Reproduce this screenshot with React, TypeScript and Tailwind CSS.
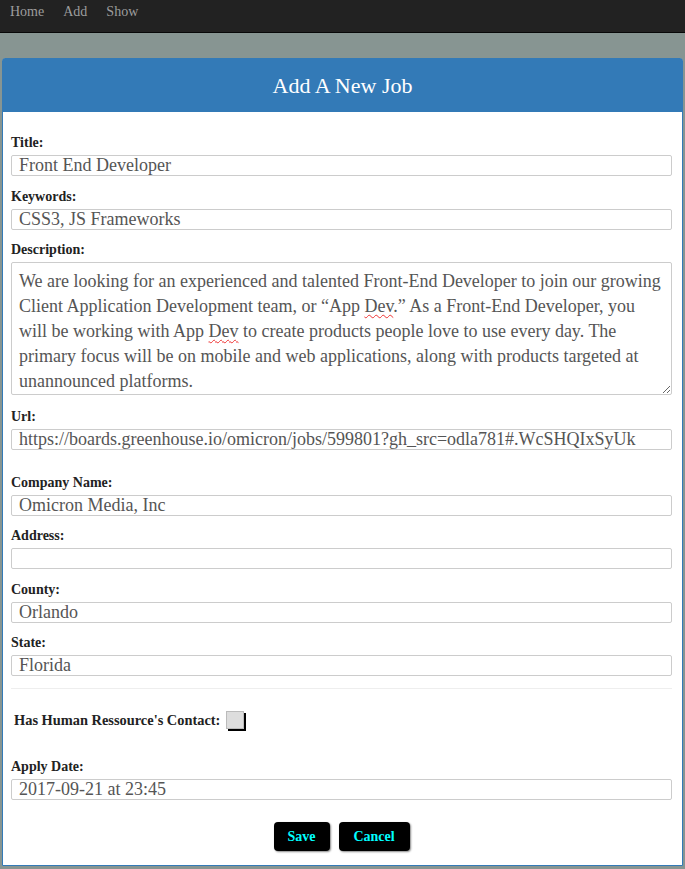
const serif = "font-['Liberation_Serif',_'Times_New_Roman',_serif]";

const fieldsTop = [
    { label: "Title:", value: "Front End Developer" },
    { label: "Keywords:", value: "CSS3, JS Frameworks" },
];

const fieldsCompany = [
    { label: "Company Name:", value: "Omicron Media, Inc" },
    { label: "Address:", value: "" },
    { label: "County:", value: "Orlando" },
    { label: "State:", value: "Florida" },
];

function Field({ label, value }: { label: string; value: string }) {
    return (
        <div className="flex flex-col">
            <label className="block text-[14px] font-bold leading-4 text-[#222] mb-[4px]">{label}</label>
            <input
                defaultValue={value}
                className={`${serif} h-[21px] w-full border border-[#ccc] rounded-[2px] px-[7px] text-[18px] leading-[19px] text-[#555] outline-none bg-white`}
            />
        </div>
    );
}

function Dev() {
    return <span className="underline decoration-wavy decoration-[#e33] decoration-1 underline-offset-2">Dev</span>;
}

export default function App() {
    return (
        <div className={`${serif} min-h-[869px] w-full bg-[#879592]`}>
            {/* navbar */}
            <nav className="h-[33px] bg-[#222] border-b border-[#080808] flex items-start gap-[19px] pl-[10px] pt-[4px]">
                {["Home", "Add", "Show"].map((l) => (
                    <a key={l} href="#" className="text-[14px] text-[#9d9d9d] leading-4">
                        {l}
                    </a>
                ))}
            </nav>

            {/* card */}
            <div className="mt-[25px] mx-[2px] border border-[#337ab7] rounded-t-[3px] bg-white">
                <div className="h-[53px] bg-[#337ab7] flex items-center justify-center">
                    <h1 className="text-[22px] text-white leading-6">Add A New Job</h1>
                </div>

                <form className="pl-[8px] pr-[10px] pt-[23px] pb-[14px] flex flex-col">
                    <div className="flex flex-col gap-[12.5px]">
                        {fieldsTop.map((f) => (
                            <Field key={f.label} {...f} />
                        ))}
                        <div className="flex flex-col">
                            <label className="block text-[14px] font-bold leading-4 text-[#222] mb-[4px]">Description:</label>
                            <div className="h-[133px] w-full border border-[#ccc] rounded-[2px] px-[7px] pt-[6px] text-[18px] leading-[25px] text-[#555] overflow-hidden resize-y whitespace-nowrap">
                                We are looking for an experienced and talented Front-End Developer to join our growing
                                <br />
                                Client Application Development team, or “App <Dev />.” As a Front-End Developer, you
                                <br />
                                will be working with App <Dev /> to create products people love to use every day. The
                                <br />
                                primary focus will be on mobile and web applications, along with products targeted at
                                <br />
                                unannounced platforms.
                            </div>
                        </div>
                        <div className="pt-[1px]">
                            <Field label="Url:" value="https://boards.greenhouse.io/omicron/jobs/599801?gh_src=odla781#.WcSHQIxSyUk" />
                        </div>
                    </div>

                    <div className="flex flex-col gap-[12.5px] mt-[25px]">
                        {fieldsCompany.map((f) => (
                            <Field key={f.label} {...f} />
                        ))}
                    </div>

                    <hr className="mt-[12px] border-0 border-t border-[#eee]" />

                    <div className="flex items-center mt-[22px] pl-[3px]">
                        <span className="text-[14.4px] font-bold leading-4 text-[#222]">Has Human Ressource's Contact:</span>
                        <span className="ml-[6px] w-[18px] h-[18px] bg-[#ddd] border border-[#bbb] shadow-[2px_2px_0_#000]" />
                    </div>

                    <div className="mt-[30px]">
                        <Field label="Apply Date:" value="2017-09-21 at 23:45" />
                    </div>

                    <div className="flex justify-center gap-[9px] mt-[22px]">
                        <button type="button" className="h-[29px] w-[56px] bg-black text-[#00ffff] font-bold text-[14px] rounded-[4px] shadow-[1px_1px_2px_#888]">
                            Save
                        </button>
                        <button type="button" className="h-[29px] w-[71px] bg-black text-[#00ffff] font-bold text-[14px] rounded-[4px] shadow-[1px_1px_2px_#888]">
                            Cancel
                        </button>
                    </div>
                </form>
            </div>
        </div>
    );
}
